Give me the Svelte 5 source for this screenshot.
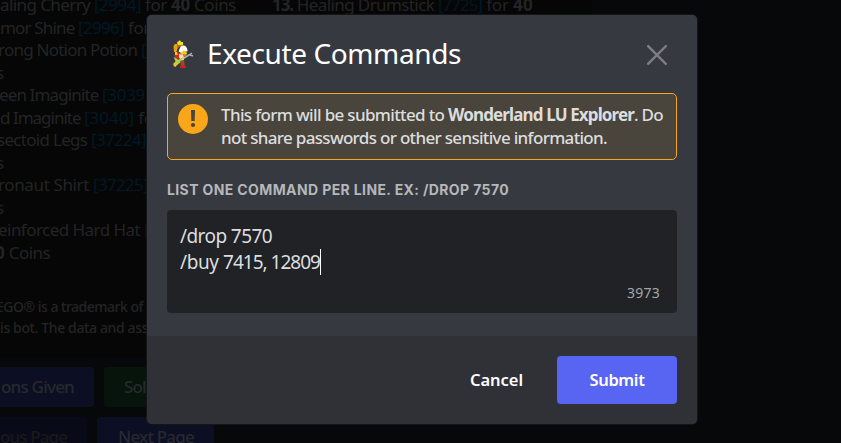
<script>
  // Each part is [kind, text, width].
  const rows = [
    { x: 0, parts: [['', 'aling Cherry ', 94], ['link', '[2994]', 47], ['', ' for ', 30], ['bold', '40', 19], ['', ' Coins', 46]] },
    { x: 0, parts: [['', 'mor Shine ', 78], ['link', '[2996]', 46], ['', ' for', 26]] },
    { x: -2, parts: [['', 'rong Notion Potion ', 143], ['link', '[', 5]] },
    { x: -4, parts: [['', 's', 8]] },
    { x: -1, parts: [['', 'een Imaginite ', 103], ['link', '[3039', 43]] },
    { x: 0, parts: [['', 'd Imaginite ', 84], ['link', '[3040]', 50], ['', ' for', 27]] },
    { x: -3, parts: [['', 'sectoid Legs ', 94], ['link', '[37224]', 55]] },
    { x: -4, parts: [['', 's', 8]] },
    { x: -2, parts: [['', 'ronaut Shirt ', 95], ['link', '[37225]', 55]] },
    { x: -4, parts: [['', 's', 8]] },
    { x: -2, parts: [['', 'einforced Hard Hat ', 146], ['link', '[', 5]] },
    { x: -5, parts: [['bold', '0', 10], ['', ' Coins', 45]] }
  ];
  const item13 = [['bold', '13.', 21], ['', ' Healing Drumstick ', 145], ['link', '[7725]', 44], ['', ' for ', 31], ['bold', '40', 20]];

  // Spread the letters so that a run of text fills the given width.
  function fit(node, width) {
    const natural = node.getBoundingClientRect().width;
    node.style.letterSpacing = `${(width - natural) / node.textContent.length}px`;
  }
</script>

<div class="screen">
  <div class="embed">
    <div class="fields">
      <div class="column">
        {#each rows as row}
          <div class="row" style:margin-left="{row.x}px">{#each row.parts as [kind, text, w]}<span class="run {kind}" use:fit={w}>{text}</span>{/each}</div>
        {/each}
      </div>
      <div class="column second">
        <div class="row">{#each item13 as [kind, text, w]}<span class="run {kind}" use:fit={w}>{text}</span>{/each}</div>
      </div>
    </div>
    <div class="legal">
      <div><span class="run" use:fit={147}>EGO® is a trademark of</span> the</div>
      <div class="indent"><span class="run" use:fit={148}>is bot. The data and ass</span></div>
    </div>
  </div>
  <div class="buttons">
    <div class="btn-row">
      <div class="btn given"><span class="run" use:fit={73}>ons Given</span></div>
      <div class="btn green"><span class="run" use:fit={60}>Solution</span></div>
    </div>
    <div class="btn-row">
      <div class="btn prev"><span class="run" use:fit={67}>ous Page</span></div>
      <div class="btn next"><span class="run" use:fit={76}>Next Page</span></div>
    </div>
  </div>

  <div class="modal" role="dialog">
    <div class="body">
      <header>
        <svg class="avatar" width="24" height="32" viewBox="0 0 24 32">
          <path fill="#e8a50c" d="M3.5 8l1.5-2h2v7l-1 1H4z" />
          <path fill="#a8761c" d="M7 5h2v2h4v2H9l-2 3z" />
          <path fill="#f3dc1c" d="M7 4l2-1 1-1 1 2 2 0v3H8z" />
          <path fill="#d8292a" d="M5 16l4-2 3 2 1 5-1 4H7l-2-4z" />
          <path fill="#f3e3d8" d="M9 16l4 1 1 5-3 1-2-3z" />
          <path fill="#f5c72a" d="M11 12h5l1 4-2 2-3-1-2-2z" />
          <path fill="#ffffff" d="M9.500 11q1-3.500 4-3.500 3 0 4 4.500v1.500l-4-1-2 2-3-1z" />
          <path fill="#e67927" d="M13 16h3l-1 2h-2z" />
          <path fill="#f5c81e" d="M5 14l2 0 1 4-3-1z" />
          <path fill="#d3252a" d="M4 17h4l3 6-4 1z" />
          <path fill="#98dc51" d="M3.500 19l2 1 3 2 4-3v3l-4 4-3 2-2-1 2-4z" />
          <path fill="#f1bf27" d="M3.500 25l3-1 1 2-2 3-2-1z" />
          <path fill="#8e5125" d="M10 23l4-1 1 6h-4z" />
          <path stroke="#a9b0b9" stroke-width="1.500" fill="none" d="M14 20l5-3 3-2M20 17l3 1" />
          <path fill="#f5d129" d="M13 18l2 1-1 2-2-1z" />
          <path fill="#cf1e20" d="M10 28l4-1 2 1.500v1.500h-6z" />
        </svg>
        <h1><span class="run" use:fit={254}>Execute Commands</span></h1>
        <svg class="close" width="20" height="20" viewBox="0 0 20 20"><path d="M1.2 1.2l17.6 17.6M18.8 1.2L1.2 18.8" /></svg>
      </header>
      <div class="notice">
        <svg width="30" height="30" viewBox="0 0 30 30">
          <circle cx="15" cy="15" r="15" fill="#faa61a" />
          <path fill="#49443c" d="M13 6h4l-.3 11h-3.4z" /><circle cx="15" cy="21" r="2.1" fill="#49443c" />
        </svg>
        <div class="message">
          <div><span class="run" use:fit={227}>{'This form will be submitted to '}</span><b class="run" use:fit={186}>Wonderland LU Explorer</b><span class="run" use:fit={29}>. Do</span></div>
          <div><span class="run" use:fit={386}>not share passwords or other sensitive information.</span></div>
        </div>
      </div>
      <div class="label"><span class="run" use:fit={256}>{'LIST ONE COMMAND PER LINE. EX: '}</span><span class="run" use:fit={86}>/DROP 7570</span></div>
      <div class="input">
        <div class="typed"><span class="run" use:fit={92}>/drop 7570</span></div>
        <div class="typed"><span class="run" use:fit={43}>{'/buy '}</span><span class="run" use:fit={97}>7415, 12809</span><i class="caret"></i></div>
        <div class="count"><span class="run" use:fit={33}>3973</span></div>
      </div>
    </div>
    <footer>
      <span class="cancel run" use:fit={53}>Cancel</span>
      <div class="submit"><span class="run" use:fit={55}>Submit</span></div>
    </footer>
  </div>
</div>

<style>
  :global(body) { background: #070809; }
  .screen {
    position: relative; width: 841px; height: 443px; overflow: hidden;
    background: #07080a; color: #232425;
    font-family: "Noto Sans", "Open Sans", sans-serif; font-size: 17px;
  }
  .run { display: inline-block; white-space: pre; }
  .embed { width: 592px; height: 357px; background: #060606; overflow: hidden; }
  .fields { display: flex; height: 270px; margin-top: -6px; }
  .column { width: 272px; flex: none; }
  .row { height: 22.5px; line-height: 22.5px; white-space: pre; }
  .link { color: #001927; }
  .bold { font-weight: 700; }
  .second { width: 320px; }
  .legal { padding-top: 33px; font-size: 14px; line-height: 20.5px; white-space: nowrap; font-weight: 500; }
  .legal > div { margin-left: -4px; }
  .legal > .indent { margin-left: 0; }
  .buttons { display: flex; flex-direction: column; gap: 10px; padding-top: 10px; }
  .btn-row { display: flex; gap: 10px; }
  .btn { height: 40px; line-height: 40px; box-sizing: border-box; border-radius: 3px; background: #0c0e23; font-weight: 500; white-space: nowrap; color: #28292e; }
  .given { width: 94px; padding-left: 1px; border-radius: 0 3px 3px 0; }
  .green { width: 110px; padding-left: 20px; background: #06140b; }
  .prev { width: 87px; border-radius: 0 3px 3px 0; background: #090a17; color: #18191c; }
  .next { width: 117px; padding-left: 21px; }

  .modal {
    position: absolute; left: 147px; top: 15px; width: 550px; height: 409px;
    display: flex; flex-direction: column; overflow: hidden;
    border-radius: 5px; background: #36393f; box-shadow: 0 0 0 1px #141518;
  }
  .body { height: 321px; box-sizing: border-box; padding: 0 20px; background: #36393f; }
  header { display: flex; align-items: center; height: 78px; }
  .avatar { margin: -1px 13px 0 3px; }
  h1 { margin: -2px 0 0; flex: 1; font-size: 28px; font-weight: 400; line-height: 36px; color: #fff; }
  .close { margin-right: 10px; margin-top: 2px; }
  .close path { stroke: #7b7d82; stroke-width: 2.4; stroke-linecap: square; }
  .notice {
    display: flex; gap: 13px; box-sizing: border-box; height: 67px; padding: 10px 10px 0;
    border: 1px solid #faa61a; border-radius: 5px; background: #49443c;
  }
  .message { margin-top: -1px; color: #dcddde; font-size: 17px; line-height: 23px; font-weight: 500; white-space: nowrap; }
  .notice svg { flex: none; }
  .label { margin-top: 20px; height: 20px; line-height: 20px; font-family: Inter, "Noto Sans", sans-serif; font-size: 14px; font-weight: 700; color: #b5b7bb; }
  .input {
    display: flex; flex-direction: column; box-sizing: border-box; height: 103px; margin-top: 10px;
    padding: 13px 17px 10px 13px; border-radius: 4px; background: #202225; color: #dcddde;
  }
  .typed { display: flex; height: 26px; line-height: 26px; font-size: 19px; }
  .caret { width: 1px; background: #fff; }
  .count { margin-top: auto; align-self: flex-end; font-size: 14px; line-height: 20px; color: #a3a6aa; }
  footer {
    display: flex; align-items: center; justify-content: flex-end; gap: 34px; flex: 1;
    padding-right: 20px; background: #2f3136; color: #fff; font-size: 16.5px; font-weight: 600;
  }
  .submit { display: flex; align-items: center; justify-content: center; width: 120px; height: 48px; border-radius: 4px; background: #5865f2; }
  footer .run { margin-top: -1px; }
</style>
